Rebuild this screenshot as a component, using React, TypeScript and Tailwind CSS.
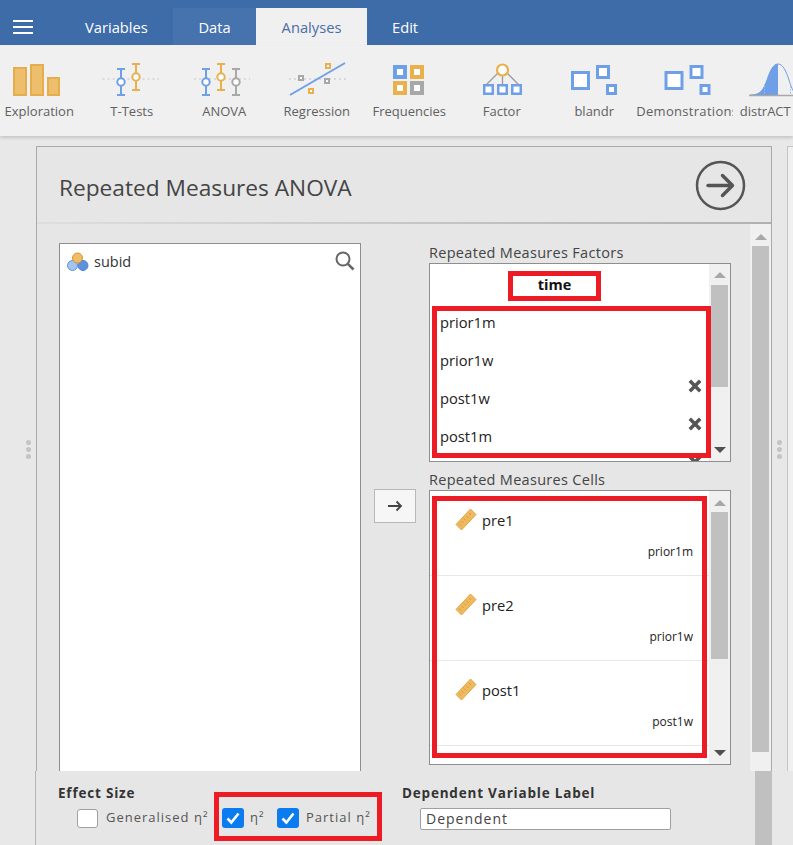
import React from "react";

const Whisker = ({ x, top, color, cy }: { x: number; top: number; color: string; cy: number }) => (
  <g stroke={color} fill="none">
    <path d={`M${x - 4} ${top}H${x + 4}M${x - 4} ${top + 26}H${x + 4}M${x} ${top}V${top + 26}`} strokeWidth="2" />
    <circle cx={x} cy={cy} r="3.7" fill="#fff" strokeWidth="2" />
  </g>
);

const Sq = ({ x, y, s, c, w = 2.5 }: { x: number; y: number; s: number; c: string; w?: number }) => (
  <rect x={x + w / 2} y={y + w / 2} width={s - w} height={s - w} fill="#fff" stroke={c} strokeWidth={w} />
);

const BLUE = "#6f9fe6";
const ORANGE = "#e9b04d";
const GRAY = "#a8a8a8";

const IconBox = ({ children }: { children: React.ReactNode }) => (
  <svg width="92" height="40" viewBox="0 0 92 40" className="block">
    {children}
  </svg>
);

const icons: Record<string, React.ReactNode> = {
  Exploration: (
    <IconBox>
      <g fill="#edbf6c" stroke="#e6ad4c" strokeWidth="2">
        <rect x="21" y="8" width="12" height="27" />
        <rect x="38" y="5" width="12" height="30" />
        <rect x="55" y="18" width="11" height="17" />
      </g>
    </IconBox>
  ),
  "T-Tests": (
    <IconBox>
      <path d="M16.5 19H73" stroke="#bcc5cf" strokeWidth="1" strokeDasharray="2 3" />
      <Whisker x={35} top={9} color={BLUE} cy={22} />
      <Whisker x={50} top={4} color={ORANGE} cy={17} />
    </IconBox>
  ),
  ANOVA: (
    <IconBox>
      <path d="M16 19H72" stroke="#bcc5cf" strokeWidth="1" strokeDasharray="2 3" />
      <Whisker x={28} top={9} color={BLUE} cy={22} />
      <Whisker x={43} top={4} color={ORANGE} cy={17} />
      <Whisker x={58} top={9} color={GRAY} cy={22} />
    </IconBox>
  ),
  Regression: (
    <IconBox>
      <path d="M18 19H75" stroke="#bcc5cf" strokeWidth="1" strokeDasharray="2 3" />
      <path d="M19 35L74 3" stroke={BLUE} strokeWidth="2" />
      <Sq x={27} y={15} s={6} c={GRAY} w={2} />
      <Sq x={53} y={18} s={6} c={GRAY} w={2} />
      <Sq x={54} y={3} s={6} c={ORANGE} w={2} />
      <Sq x={37} y={28} s={6} c={ORANGE} w={2} />
    </IconBox>
  ),
  Frequencies: (
    <IconBox>
      <Sq x={30} y={5} s={14} c={BLUE} w={4} />
      <Sq x={47} y={5} s={14} c={ORANGE} w={4} />
      <Sq x={30} y={21} s={14} c={ORANGE} w={4} />
      <Sq x={47} y={21} s={14} c={GRAY} w={4} />
    </IconBox>
  ),
  Factor: (
    <IconBox>
      <path d="M42 13L30 25M46.500 13V25M51 13L63 25" stroke="#9a9a9a" strokeWidth="1.3" />
      <circle cx="46.500" cy="10" r="5.5" fill="#fff" stroke={ORANGE} strokeWidth="2.2" />
      <Sq x={27} y={24} s={11} c={BLUE} />
      <Sq x={41} y={24} s={11} c={BLUE} />
      <Sq x={55} y={24} s={11} c={BLUE} />
    </IconBox>
  ),
  blandr: (
    <IconBox>
      <Sq x={23} y={11} s={19} c={BLUE} w={3} />
      <Sq x={48} y={5} s={14} c={BLUE} w={3} />
      <Sq x={58} y={24} s={11} c={BLUE} w={3} />
    </IconBox>
  ),
  Demonstrations: (
    <IconBox>
      <Sq x={23.5} y={11} s={19} c={BLUE} w={3} />
      <Sq x={48.5} y={5} s={14} c={BLUE} w={3} />
      <Sq x={58.5} y={24} s={11} c={BLUE} w={3} />
    </IconBox>
  ),
  distrACT: (
    <IconBox>
      <path d="M17 35C28 35 30 30 34 20C37 11 40 4 45 4V35Z" fill="#6f9fe6" />
      <path d="M17 35C28 35 30 30 34 20C37 11 40 4 45 4C50 4 53 11 56 20C58 27 60 31 62 33" fill="none" stroke={BLUE} strokeWidth="1" />
      <path d="M31.500 26V35M57.500 26V35" stroke="#9fbdea" strokeWidth="1" strokeDasharray="1.500 1.500" />
      <path d="M16 35.500H70" stroke="#a8a8a8" strokeWidth="1.500" />
    </IconBox>
  ),
};

const ribbon: { name: string; cls: string }[] = [
  { name: "Exploration", cls: "text-center" },
  { name: "T-Tests", cls: "text-center" },
  { name: "ANOVA", cls: "text-center" },
  { name: "Regression", cls: "text-center" },
  { name: "Frequencies", cls: "text-center" },
  { name: "Factor", cls: "text-center" },
  { name: "blandr", cls: "text-center" },
  { name: "Demonstrations", cls: "text-left ml-[-4px] tracking-[0.3px]" },
  { name: "distrACT", cls: "text-left pl-[9px]" },
];

const Arrow = ({ up }: { up?: boolean }) => (
  <div
    className={
      up
        ? "w-0 h-0 border-x-[6px] border-x-transparent border-b-[6px] border-b-[#a8a8a8]"
        : "w-0 h-0 border-x-[6px] border-x-transparent border-t-[6px] border-t-[#505050]"
    }
  />
);

const Ruler = () => (
  <svg width="22" height="23" viewBox="0 0 22 23" className="shrink-0 mt-[-2px]">
    <path d="M15.5 1L21 6.5L6.5 22L1 16.5Z" fill="#eeb95f" stroke="#e3a63f" strokeWidth="1" />
    <path d="M14 5l2 2M11.5 8l2 2M9 10.500l2 2M6.500 13l2 2M4 15.500l2 2" stroke="#d79a35" strokeWidth="1" />
  </svg>
);

const Close = () => (
  <svg width="14" height="14" viewBox="0 0 14 14">
    <path d="M1.800 1.800L12.200 12.200M12.200 1.800L1.800 12.200" stroke="#555" strokeWidth="3.500" />
  </svg>
);

const Check = () => (
  <svg width="16" height="14" viewBox="0 0 16 14">
    <path d="M2.500 7.500L6.300 11.500L13.500 2.500" fill="none" stroke="#fff" strokeWidth="2.600" />
  </svg>
);

const factors = ["prior1m", "prior1w", "post1w", "post1m"];
const cells = [
  ["pre1", "prior1m"],
  ["pre2", "prior1w"],
  ["post1", "post1w"],
];

const Red = ({ cls }: { cls: string }) => <div className={`absolute border-[5px] border-[#ed1c24] ${cls}`} />;

const Dots = () => (
  <div className="flex flex-col gap-[2px]">
    <span className="w-[5px] h-[5px] rounded-full bg-[#c4c4c4]" />
    <span className="w-[5px] h-[5px] rounded-full bg-[#c4c4c4]" />
    <span className="w-[5px] h-[5px] rounded-full bg-[#c4c4c4]" />
  </div>
);

export default function App() {
  return (
    <div className="relative w-[793px] h-[845px] overflow-hidden flex flex-col bg-[#e8e8e8] text-[#333] font-['Open_Sans','Noto_Sans',sans-serif]">
      {/* Title bar */}
      <div className="h-[45px] shrink-0 bg-[#3e6ca8] flex items-end text-[14.7px]">
        <div className="w-[85px] h-[37px] flex items-center pl-[13px]">
          <div className="w-[20px] flex flex-col gap-[4px]">
            <span className="h-[2px] bg-white" />
            <span className="h-[2px] bg-white" />
            <span className="h-[2px] bg-white" />
          </div>
        </div>
        <div className="w-[88px] h-[37px] flex items-center pt-[2px] text-white">Variables</div>
        <div className="w-[83px] h-[37px] flex items-center justify-center pt-[2px] bg-[#4672ae] text-white">Data</div>
        <div className="w-[111px] h-[37px] flex items-center justify-center pt-[2px] bg-[#f0f0f0] text-[#4a6ea5]">Analyses</div>
        <div className="h-[37px] flex items-center pl-[25px] pt-[2px] text-white">Edit</div>
      </div>

      {/* Ribbon */}
      <div className="h-[91px] shrink-0 bg-[#f0f0f0] flex shadow-[0_2px_3px_rgba(0,0,0,0.15)] z-10">
        <div className="flex ml-[-7px] pt-[15px]">
          {ribbon.map((r) => (
            <div key={r.name} className="w-[92.5px] shrink-0 flex flex-col items-center">
              <div className="h-[40px]">{icons[r.name]}</div>
              <div className={`mt-[1px] w-[97px] shrink-0 text-[13px] leading-[20px] text-[#606060] overflow-hidden whitespace-nowrap ${r.cls}`}>{r.name}</div>
            </div>
          ))}
        </div>
      </div>

      {/* Content */}
      <div className="flex-1 min-h-0 overflow-hidden flex pt-[10px]">
        <div className="w-[36px] shrink-0 flex items-center justify-end pr-[5px] pb-[18px]">
          <Dots />
        </div>
        <div className="w-[736px] shrink-0 h-[700px] border border-[#a9a9a9] bg-[#e6e6e6] flex flex-col">
          <div className="h-[75px] shrink-0 flex items-center justify-between pl-[22px] pr-[25px]">
            <div className="text-[22.700px] text-[#444] pt-[7px]">Repeated Measures ANOVA</div>
            <svg width="51" height="51" viewBox="0 0 51 51" className="mt-[2px]">
              <circle cx="25.500" cy="25.500" r="23.500" fill="none" stroke="#555" strokeWidth="2.500" />
              <path d="M13 25.500H37M27.500 15.500L37.500 25.500L27.500 35.500" fill="none" stroke="#555" strokeWidth="3.500" strokeLinecap="round" strokeLinejoin="round" />
            </svg>
          </div>
          <div className="h-[2px] shrink-0 bg-linear-to-r from-[#dedede] to-[#b0b0b0]" />
          <div className="flex-1 flex min-h-0">
            <div className="flex-1 pl-[22px] pt-[19px] flex">
              {/* variables */}
              <div className="w-[302px] h-[600px] bg-white border border-[#8e8e8e] flex items-start justify-between pl-[7px] pr-[5px] pt-[7px]">
                <div className="flex items-center gap-[5px] text-[14.500px] text-[#333]">
                  <svg width="22" height="20" viewBox="0 0 22 20">
                    <circle cx="5.500" cy="13.500" r="5" fill="#a5c3f0" stroke="#5e92df" />
                    <circle cx="16" cy="13.500" r="5" fill="#5e92df" stroke="#4f83d0" />
                    <circle cx="10.500" cy="6" r="5" fill="#f0bd66" stroke="#d2962f" />
                  </svg>
                  subid
                </div>
                <svg width="20" height="20" viewBox="0 0 20 20">
                  <circle cx="8" cy="8" r="6.500" fill="none" stroke="#666" strokeWidth="2" />
                  <path d="M12.800 12.800L18.500 18.500" stroke="#666" strokeWidth="2.600" />
                </svg>
              </div>
              {/* arrow button */}
              <div className="w-[68px] shrink-0 pl-[13px] pt-[246px]">
                <div className="w-[42px] h-[34px] bg-[#f6f6f6] border border-[#b8b8b8] flex items-center justify-center">
                  <svg width="16" height="12" viewBox="0 0 16 12">
                    <path d="M1 6H14M9.500 1.500L14 6L9.500 10.500" fill="none" stroke="#444" strokeWidth="1.800" />
                  </svg>
                </div>
              </div>
              {/* right */}
              <div className="w-[302px] shrink-0">
                <div className="h-[20px] text-[14.500px] tracking-[0.3px] leading-[20px] text-[#444]">Repeated Measures Factors</div>
                <div className="h-[199px] bg-white border border-[#8e8e8e] flex overflow-hidden">
                  <div className="flex-1 min-w-0">
                    <div className="h-[39px] flex items-center justify-center pt-[3px] pr-[30px] font-bold text-[14.500px] text-[#111]">time</div>
                    {factors.map((f, i) => (
                      <div key={f} className="relative h-[38px] flex items-center pl-[10px] text-[14.700px] text-[#222]">
                        {f}
                        {i > 1 && (
                          <span className="absolute right-[7px] top-[0px]">
                            <Close />
                          </span>
                        )}
                      </div>
                    ))}
                    <div className="relative h-[38px]">
                      <span className="absolute right-[7px] top-[0px]">
                        <Close />
                      </span>
                    </div>
                  </div>
                  <div className="w-[21px] shrink-0 bg-[#f0f0f0] flex flex-col items-center pt-[8px]">
                    <Arrow up />
                    <div className="w-[17px] h-[102px] mt-[7px] bg-[#c0c0c0]" />
                    <div className="mt-[60px]">
                      <Arrow />
                    </div>
                  </div>
                </div>
                <div className="h-[20px] mt-[8px] text-[14.500px] tracking-[0.3px] leading-[20px] text-[#444]">Repeated Measures Cells</div>
                <div className="h-[275px] bg-white border border-[#8e8e8e] flex overflow-hidden">
                  <div className="flex-1 min-w-0">
                    {[...cells, ["", ""]].map(([n, l], i) => (
                      <div key={i} className="h-[85px] shrink-0 border-b border-[#e8e8e8] pl-[25px] pr-[16px] pt-[18px]">
                        <div className="flex items-center gap-[5px] text-[14.700px] text-[#222] h-[23px]">
                          <Ruler />
                          {n}
                        </div>
                        <div className="text-right text-[12px] leading-[16px] mt-[12px] text-[#222]">{l}</div>
                      </div>
                    ))}
                  </div>
                  <div className="w-[21px] shrink-0 bg-[#f0f0f0] flex flex-col items-center pt-[9px]">
                    <Arrow up />
                    <div className="w-[17px] h-[147px] mt-[6px] bg-[#c0c0c0]" />
                    <div className="mt-[91px]">
                      <Arrow />
                    </div>
                  </div>
                </div>
              </div>
            </div>
            {/* outer scrollbar */}
            <div className="w-[21px] shrink-0 bg-[#f0f0f0] flex flex-col items-center pt-[10px]">
              <Arrow up />
              <div className="w-[17px] h-[506px] mt-[6px] bg-[#c0c0c0]" />
            </div>
          </div>
        </div>
        <div className="w-[15px] shrink-0 flex items-center justify-center pb-[18px]">
          <Dots />
        </div>
        <div className="flex-1 h-[700px] border-l border-t border-[#c4c4c4] bg-[#f0f0f0]" />
      </div>

      {/* Footer */}
      <div className="h-[74px] shrink-0 flex z-10 bg-[#e8e8e8]">
        <div className="ml-[35px] w-[737px] border-l border-[#b5b5b5] bg-[#e6e6e6] flex">
          <div className="flex-1 pl-[22px] pt-[13px] flex">
            <div className="w-[344px] shrink-0">
              <div className="text-[13.500px] tracking-[0.8px] leading-[18px] font-bold text-[#333]">Effect Size</div>
              <div className="flex items-center mt-[6px] ml-[19px] text-[13px] tracking-[1px] text-[#555] h-[20px]">
                <span className="w-[21px] h-[19px] rounded-[3px] bg-white border border-[#a0a0a0] mr-[8px]" />
                <span className="w-[102px] whitespace-nowrap">Generalised η²</span>
                <span className="ml-[14px] w-[22px] h-[20px] rounded-[3px] bg-[#0a7cf0] flex items-center justify-center mr-[6px]">
                  <Check />
                </span>
                <span className="w-[15px]">η²</span>
                <span className="ml-[12px] w-[22px] h-[20px] rounded-[3px] bg-[#0a7cf0] flex items-center justify-center mr-[7px]">
                  <Check />
                </span>
                <span className="whitespace-nowrap">Partial η²</span>
              </div>
            </div>
            <div>
              <div className="text-[13.500px] tracking-[0.8px] leading-[18px] font-bold text-[#333]">Dependent Variable Label</div>
              <div className="mt-[6px] ml-[18px] w-[251px] h-[22px] bg-white border border-[#a0a0a0] rounded-[2px] pl-[5px] text-[14px] tracking-[1px] leading-[20px] text-[#444]">Dependent</div>
            </div>
          </div>
          <div className="w-[22px] shrink-0 flex justify-end">
            <div className="w-[17px] h-full bg-[#c0c0c0]" />
          </div>
        </div>
      </div>

      {/* Red annotations */}
      <Red cls="left-[508px] top-[271px] w-[93px] h-[30px]" />
      <Red cls="left-[432px] top-[306px] w-[279px] h-[152px]" />
      <Red cls="left-[432px] top-[496px] w-[275px] h-[262px]" />
      <Red cls="z-20 left-[214px] top-[792px] w-[168px] h-[49px]" />
    </div>
  );
}
